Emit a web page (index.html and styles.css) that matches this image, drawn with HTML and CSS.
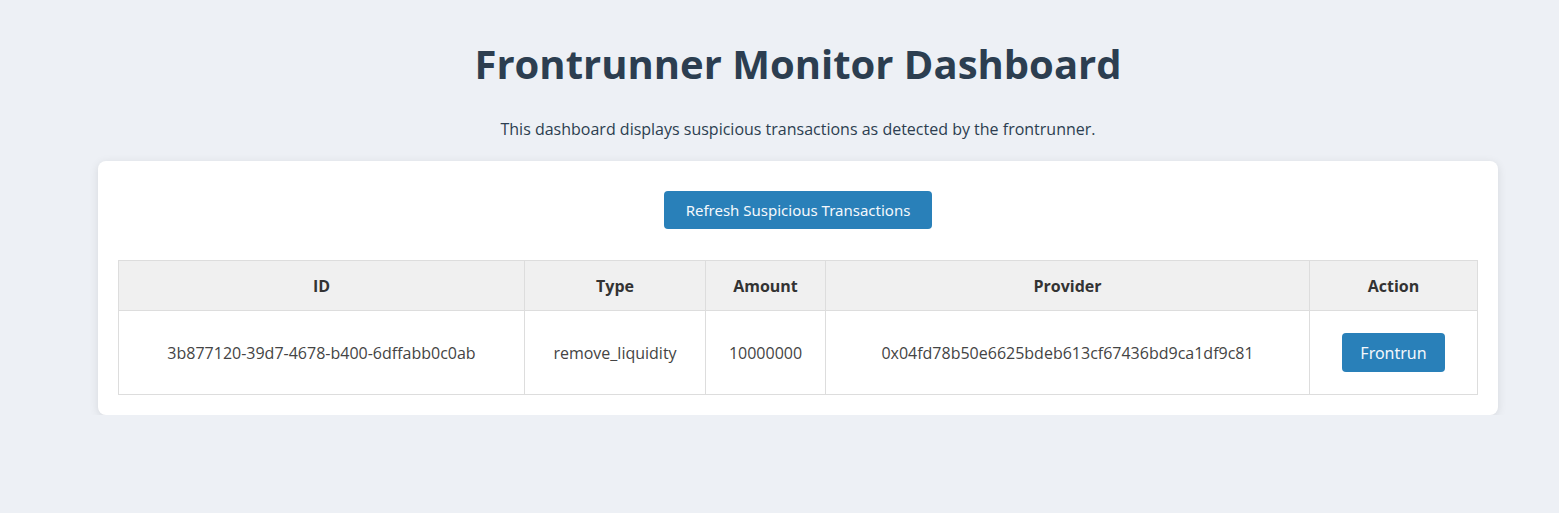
FILE: index.html
```html
<!DOCTYPE html>
<html>
<head>
<meta charset="utf-8">
<link rel="stylesheet" href="styles.css">
</head>
<body>
<div class="container">
  <h1 class="title">Frontrunner Monitor Dashboard</h1>
  <p class="subtitle">This dashboard displays suspicious transactions as detected by the frontrunner.</p>
  <div class="card">
    <div class="actions">
      <button class="btn btn-refresh">Refresh Suspicious Transactions</button>
    </div>
    <table class="tx-table">
      <thead>
        <tr>
          <th class="col-id">ID</th>
          <th class="col-type">Type</th>
          <th class="col-amount">Amount</th>
          <th class="col-provider">Provider</th>
          <th class="col-action">Action</th>
        </tr>
      </thead>
      <tbody>
        <tr>
          <td>3b877120-39d7-4678-b400-6dffabb0c0ab</td>
          <td>remove_liquidity</td>
          <td>10000000</td>
          <td>0x04fd78b50e6625bdeb613cf67436bd9ca1df9c81</td>
          <td><button class="btn btn-front">Frontrun</button></td>
        </tr>
      </tbody>
    </table>
  </div>
</div>
</body>
</html>
```
FILE: styles.css
```css
html, body {
  margin: 0;
  padding: 0;
}
body {
  background: #edf0f5;
  font-family: "Open Sans", "Noto Sans", sans-serif;
  color: #2c3e50;
}
.container {
  width: 1400px;
  margin-left: 98px;
  padding-top: 37px;
}
.title {
  text-align: center;
  font-size: 40px;
  font-weight: 700;
  margin: 0;
  line-height: 54px;
  color: #2c3e50;
}
.subtitle {
  text-align: center;
  font-size: 16px;
  margin: 27px 0 0;
  line-height: 22px;
  color: #2c3e50;
}
.card {
  margin-top: 21px;
  background: #fff;
  border-radius: 8px;
  box-shadow: 0 2px 10px rgba(0, 0, 0, 0.1);
  padding: 30px 20px 20px;
}
.actions {
  display: flex;
  justify-content: center;
}
.btn {
  background: #2980b9;
  color: #f4f8fc;
  border: none;
  border-radius: 4px;
  font-family: "Noto Sans", "Open Sans", sans-serif;
  font-size: 15px;
  cursor: pointer;
}
.btn-refresh {
  height: 38px;
  width: 268px;
  padding: 0 10px;
}
.tx-table {
  margin-top: 31px;
  width: 100%;
  border-collapse: collapse;
  font-size: 16px;
  color: #444;
}
.tx-table th,
.tx-table td {
  border: 1px solid #ddd;
  text-align: center;
  padding: 0 10px;
}
.tx-table th {
  background: #f0f0f0;
  height: 49px;
  font-weight: 700;
  color: #333;
}
.tx-table td {
  height: 83px;
}
.col-id { width: 385px; }
.col-type { width: 160px; }
.col-amount { width: 99px; }
.col-provider { width: 463px; }
.btn-front {
  width: 103px;
  height: 39px;
  font-size: 16px;
}
```
